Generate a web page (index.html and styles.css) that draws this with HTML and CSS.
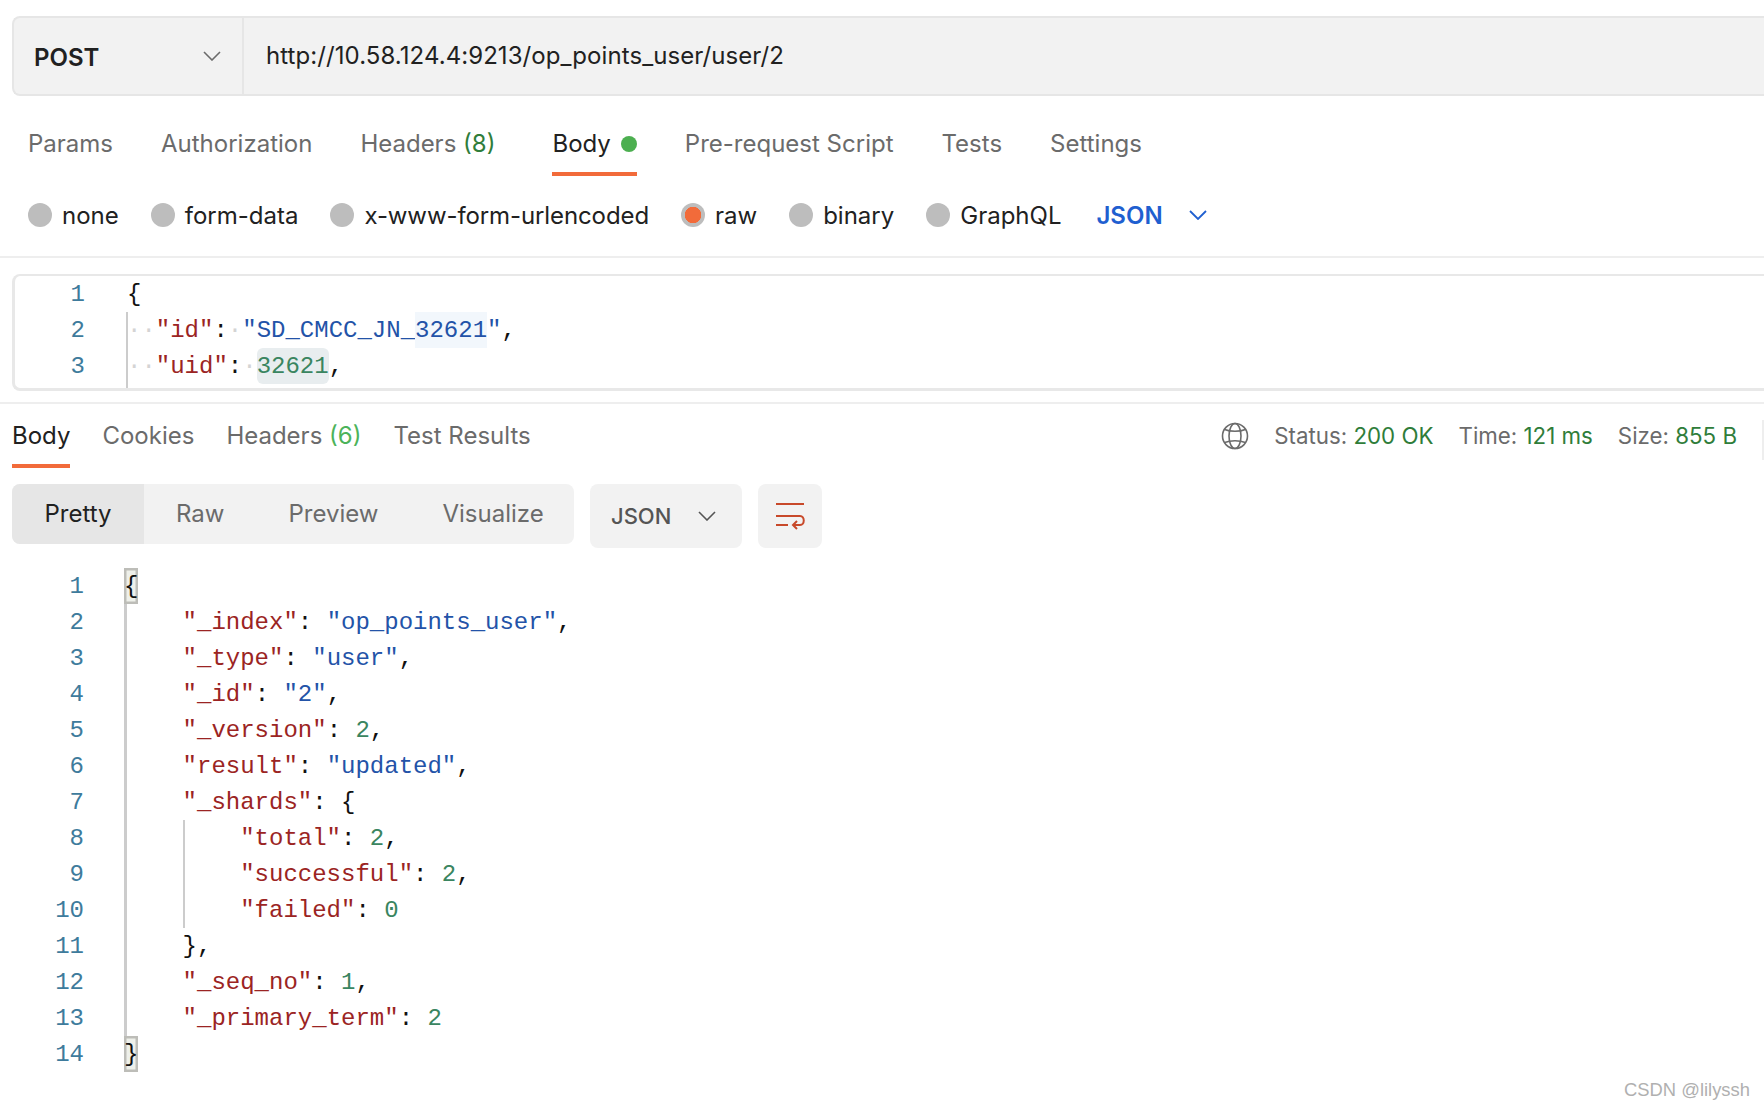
FILE: index.html
```html
<!DOCTYPE html>
<html lang="en">
<head>
<meta charset="utf-8">
<title>POST request</title>
<link rel="stylesheet" href="styles.css">
</head>
<body>
<main class="page">
  <div class="urlbar">
    <div class="method"><span class="method-name">POST</span>
      <svg class="chev" width="18" height="10" viewBox="0 0 18 10"><path d="M1 1l8 8 8-8" fill="none" stroke="#6b6b6b" stroke-width="1.6"/></svg>
    </div>
    <div class="url">http://10.58.124.4:9213/op_points_user/user/2</div>
  </div>

  <nav class="tabs req-tabs">
    <span class="tab">Params</span>
    <span class="tab">Authorization</span>
    <span class="tab">Headers <span class="count">(8)</span></span>
    <span class="tab active">Body<i class="dot"></i></span>
    <span class="tab">Pre-request Script</span>
    <span class="tab">Tests</span>
    <span class="tab">Settings</span>
  </nav>

  <div class="radios">
    <span class="radio"><i class="circle"></i>none</span>
    <span class="radio"><i class="circle"></i>form-data</span>
    <span class="radio long"><i class="circle"></i>x-www-form-urlencoded</span>
    <span class="radio"><i class="circle on"></i>raw</span>
    <span class="radio"><i class="circle"></i>binary</span>
    <span class="radio"><i class="circle"></i>GraphQL</span>
    <span class="lang">JSON
      <svg width="18" height="10" viewBox="0 0 18 10"><path d="M1 1l8 8 8-8" fill="none" stroke="#1f5fd0" stroke-width="1.8"/></svg>
    </span>
  </div>

  <section class="editor">
    <div class="gutter req-gutter"><div>1</div><div>2</div><div>3</div></div>
    <div class="code req-code">
      <div class="line">{</div>
      <div class="req-fold">
        <div class="line"><span class="ws">··</span><span class="k">"id"</span>:<span class="ws">·</span><span class="s">"SD_CMCC_JN_<span class="hl-s">32621</span>"</span>,</div>
        <div class="line"><span class="ws">··</span><span class="k">"uid"</span>:<span class="ws">·</span><span class="n hl-n">32621</span>,</div>
      </div>
    </div>
  </section>

  <div class="response">
    <div class="res-head">
      <nav class="tabs res-tabs">
        <span class="tab active">Body</span>
        <span class="tab">Cookies</span>
        <span class="tab">Headers <span class="count light">(6)</span></span>
        <span class="tab">Test Results</span>
      </nav>
      <div class="status">
        <svg class="globe" width="28" height="28" viewBox="0 0 28 28" fill="none" stroke="#6b6b6b" stroke-width="1.6"><circle cx="14" cy="14" r="12.5"/><ellipse cx="14" cy="14" rx="6" ry="12.5"/><path d="M3.600 7.500c6 2.400 14.800 2.400 20.800 0M3.600 20.500c6-2.400 14.800-2.400 20.800 0"/></svg>
        <span>Status: <b>200 OK</b></span>
        <span>Time: <b>121 ms</b></span>
        <span>Size: <b>855 B</b></span>
        <i class="tick"></i>
      </div>
    </div>

    <div class="toolbar">
      <div class="segment">
        <span class="seg current">Pretty</span>
        <span class="seg">Raw</span>
        <span class="seg">Preview</span>
        <span class="seg">Visualize</span>
      </div>
      <div class="select">JSON
        <svg width="18" height="10" viewBox="0 0 18 10"><path d="M1 1l8 8 8-8" fill="none" stroke="#555" stroke-width="1.6"/></svg>
      </div>
      <div class="wrap-btn">
        <svg width="30" height="28" viewBox="0 0 30 28" fill="none" stroke="#c8492a" stroke-width="2"><path d="M1 2h28M1 14h24c5 0 5 9 0 9h-7M1 23h12M22 19l-4 4 4 4"/></svg>
      </div>
    </div>

    <section class="result">
      <div class="gutter res-gutter"><div>1</div><div>2</div><div>3</div><div>4</div><div>5</div><div>6</div><div>7</div><div>8</div><div>9</div><div>10</div><div>11</div><div>12</div><div>13</div><div>14</div></div>
      <div class="code">
        <div class="line"><span class="match">{</span></div>
        <div class="fold">
          <div class="line">    <span class="k">"_index"</span>: <span class="s">"op_points_user"</span>,</div>
          <div class="line">    <span class="k">"_type"</span>: <span class="s">"user"</span>,</div>
          <div class="line">    <span class="k">"_id"</span>: <span class="s">"2"</span>,</div>
          <div class="line">    <span class="k">"_version"</span>: <span class="n">2</span>,</div>
          <div class="line">    <span class="k">"result"</span>: <span class="s">"updated"</span>,</div>
          <div class="line">    <span class="k">"_shards"</span>: {</div>
          <div class="fold-inner">
            <div class="line">    <span class="k">"total"</span>: <span class="n">2</span>,</div>
            <div class="line">    <span class="k">"successful"</span>: <span class="n">2</span>,</div>
            <div class="line">    <span class="k">"failed"</span>: <span class="n">0</span></div>
          </div>
          <div class="line">    },</div>
          <div class="line">    <span class="k">"_seq_no"</span>: <span class="n">1</span>,</div>
          <div class="line">    <span class="k">"_primary_term"</span>: <span class="n">2</span></div>
        </div>
        <div class="line"><span class="match">}</span></div>
      </div>
    </section>
  </div>
  <div class="watermark">CSDN @lilyssh</div>
</main>
</body>
</html>
```
FILE: styles.css
```css
* { box-sizing: border-box; }
html, body { margin: 0; padding: 0; background: #fff; }
body { width: 1764px; height: 1110px; overflow: hidden; font-family: Inter, "Liberation Sans", sans-serif; font-size: 24px; color: #6b6b6b; }
.page { position: relative; height: 1110px; padding-top: 16px; overflow: hidden; }

.urlbar { display: flex; height: 80px; margin-left: 12px; background: #f2f2f2; border: solid #e6e6e6; border-width: 2px 0 2px 2px; border-radius: 8px 0 0 8px; color: #212121; }
.method { display: flex; align-items: center; justify-content: space-between; width: 230px; padding: 0 21px 0 20px; border-right: 2px solid #e6e6e6; }
.method-name { font-weight: 600; font-size: 24px; margin-top: 3px; }
.url { display: flex; align-items: center; padding-left: 22px; padding-bottom: 2px; font-size: 24px; letter-spacing: 0.07px; }

.tabs { display: flex; gap: 48px; line-height: 32px; }
.tab { display: block; height: 48px; padding-bottom: 12px; border-bottom: 4px solid transparent; white-space: pre; }
.tab.active { color: #212121; border-bottom-color: #f26b3a; }
.req-tabs { margin-top: 32px; padding-left: 28px; }
.req-tabs .active { margin-left: 9px; }
.count { color: #2f7d3a; }
.count.light { color: #4cb35a; }
.dot { display: inline-block; width: 16px; height: 16px; margin-left: 10px; border-radius: 50%; background: #4caf50; }

.radios { display: flex; align-items: center; height: 82px; padding: 0 0 2px 28px; border-bottom: 2px solid #eee; color: #212121; }
.radio { display: flex; align-items: center; gap: 10px; margin-right: 32px; }
.radio.long { letter-spacing: -0.1px; }
.circle { display: block; width: 24px; height: 24px; border-radius: 50%; background: #bdbdbd; }
.circle.on { background: radial-gradient(circle, #f26b3a 0 8px, #bdbdbd 8.5px); }
.lang { display: flex; align-items: center; gap: 26px; margin-left: 3px; font-weight: 600; color: #1f5fd0; }

.code, .gutter { font-family: "Liberation Mono", monospace; font-size: 24px; line-height: 38px; }
.gutter { text-align: right; color: #3e7b9c; }
.gutter div { height: 36px; }
.code { color: #111; }
.line { height: 36px; white-space: pre; }
.k { color: #9b2423; }
.s { color: #2353a8; }
.n { color: #3a8560; }
.ws { color: #d4d4d4; }

.editor { display: flex; height: 117px; margin-top: 16px; margin-left: 12px; border: solid #e8e8e8; border-width: 2px 0 3px 3px; border-radius: 8px 0 0 8px; }
.req-gutter { width: 70px; }
.req-code { margin-left: 42px; }
.req-fold { height: 76px; box-shadow: -1px 0 #ccc, inset 1px 0 #ccc; }
.hl-s { display: inline-block; height: 36px; background: #f2f7fc; }
.hl-n { display: inline-block; height: 36px; background: #e8edef; border-radius: 6px; }

.response { margin-top: 11px; border-top: 2px solid #eee; }
.res-head { display: flex; justify-content: space-between; padding-left: 12px; padding-top: 16px; }
.res-tabs { gap: 32px; }
.status { display: flex; align-items: flex-start; gap: 25px; line-height: 32px; font-size: 22.3px; }
.status b { font-weight: 400; color: #2f7d3a; }
.globe { margin-top: 2px; }
.tick { display: block; width: 2px; height: 40px; background: #eee; }

.toolbar { display: flex; align-items: flex-start; gap: 16px; margin-top: 16px; margin-left: 12px; }
.segment { display: flex; height: 60px; width: 562px; background: #f2f2f2; border-radius: 8px; overflow: hidden; }
.seg { display: flex; flex: none; align-items: center; justify-content: center; padding: 0 32px 2px; }
.seg.current { width: 132px; padding: 0 0 2px; background: #e6e6e6; color: #212121; }
.select { display: flex; align-items: center; gap: 27px; height: 64px; width: 152px; padding-left: 21px; background: #f2f2f2; border-radius: 8px; font-weight: 500; font-size: 22px; color: #555; }
.wrap-btn { display: flex; align-items: center; justify-content: center; width: 64px; height: 64px; background: #f2f2f2; border-radius: 8px; }

.result { display: flex; margin-top: 20px; }
.res-gutter { width: 84px; }
.result .code { margin-left: 41px; }
.fold { box-shadow: -1px 0 #ccc, inset 2px 0 #ccc; }
.fold-inner { margin-left: 57.6px; box-shadow: inset 2px 0 #ccc; height: 108px; }
.match { display: inline-block; width: 14.4px; height: 36px; margin-left: -1px; background: #eef0ea; box-shadow: inset 0 0 0 2.5px #bdbdb8; }

.watermark { position: absolute; left: 1624px; top: 1078px; font-family: "Liberation Sans", sans-serif; font-size: 18.4px; line-height: 24px; color: #b0b0b0; }
```
